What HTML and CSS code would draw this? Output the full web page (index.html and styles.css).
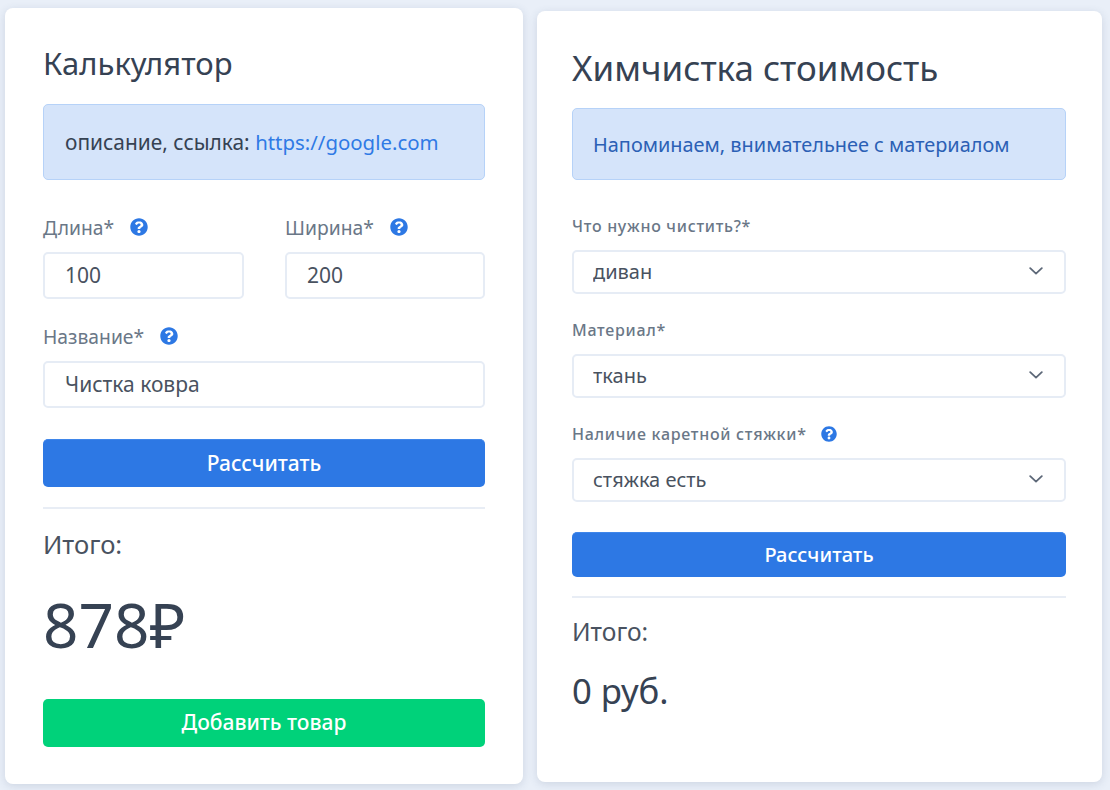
FILE: index.html
```html
<!DOCTYPE html>
<html lang="ru">
<head>
<meta charset="utf-8">
<title>Калькулятор</title>
<link rel="stylesheet" href="styles.css">
</head>
<body>
<svg class="defs" width="0" height="0" aria-hidden="true">
  <symbol id="q" viewBox="0 0 512 512"><path d="M504 256c0 137-111 248-248 248S8 393 8 256 119 8 256 8s248 111 248 248zM262.700 90c-54.500 0-89.300 23-116.600 63.800-3.500 5.300-2.400 12.400 2.700 16.300l34.700 26.300c5.200 3.900 12.600 3 16.700-2.100 17.900-22.700 30.100-35.800 57.300-35.800 20.400 0 45.700 13.100 45.700 32.900 0 15-12.400 22.700-32.500 34-23.500 13.200-54.600 29.600-54.600 70.600V300c0 6.600 5.400 12 12 12h56c6.600 0 12-5.400 12-12v-1.300c0-28.400 83-29.600 83-106.700 0-58-60.200-102-116.600-102zM256 338c-25.400 0-46 20.600-46 46s20.600 46 46 46 46-20.600 46-46-20.600-46-46-46z"/></symbol>
  <symbol id="chev" viewBox="0 0 14 8"><path d="M1.200 1.200 7 6.600l5.800-5.400" fill="none" stroke="currentColor" stroke-width="1.800" stroke-linecap="round" stroke-linejoin="round"/></symbol>
</svg>
<main class="page">
  <section class="card card-a">
    <h2 class="title">Калькулятор</h2>
    <div class="alert">описание, ссылка: <a href="#">https://google.com</a></div>
    <div class="row">
      <div class="field">
        <label class="label">Длина* <svg class="help"><use href="#q"/></svg></label>
        <input class="input" type="text" value="100">
      </div>
      <div class="field">
        <label class="label">Ширина* <svg class="help"><use href="#q"/></svg></label>
        <input class="input" type="text" value="200">
      </div>
    </div>
    <div class="field">
      <label class="label">Название* <svg class="help"><use href="#q"/></svg></label>
      <input class="input" type="text" value="Чистка ковра">
    </div>
    <button class="btn btn-blue" type="button">Рассчитать</button>
    <hr class="rule">
    <div class="total-label">Итого:</div>
    <div class="total">878₽</div>
    <button class="btn btn-green" type="button">Добавить товар</button>
  </section>
  <section class="card card-b">
    <h2 class="title">Химчистка стоимость</h2>
    <div class="alert">Напоминаем, внимательнее с материалом</div>
    <div class="field">
      <label class="label">Что нужно чистить?*</label>
      <div class="select-wrap"><select class="input"><option>диван</option></select><svg class="chev"><use href="#chev"/></svg></div>
    </div>
    <div class="field">
      <label class="label">Материал*</label>
      <div class="select-wrap"><select class="input"><option>ткань</option></select><svg class="chev"><use href="#chev"/></svg></div>
    </div>
    <div class="field">
      <label class="label">Наличие каретной стяжки* <svg class="help"><use href="#q"/></svg></label>
      <div class="select-wrap"><select class="input"><option>стяжка есть</option></select><svg class="chev"><use href="#chev"/></svg></div>
    </div>
    <button class="btn btn-blue" type="button">Рассчитать</button>
    <hr class="rule">
    <div class="total-label">Итого:</div>
    <div class="total">0 руб.</div>
  </section>
</main>
</body>
</html>
```
FILE: styles.css
```css
* { box-sizing: border-box; }
html, body { margin: 0; height: 100%; overflow: hidden; }
body {
  background: #e9eff8;
  font-family: "Noto Sans", sans-serif;
  color: #364253;
}
.defs { position: absolute; }
.page {
  display: flex;
  align-items: flex-start;
  gap: 14px;
  padding: 8px 8px 0 5px;
}
.card {
  background: #fff;
  border-radius: 8px;
  box-shadow: 0 2px 8px rgba(60, 80, 120, .16);
}
.title { margin: 0; font-weight: 400; color: #364253; }
.alert {
  background: #d5e4fa;
  border: 1px solid #b6d2f8;
  border-radius: 5px;
  display: flex;
  align-items: center;
  white-space: pre-wrap;
}
.alert a { color: #2f7ae5; text-decoration: none; }
.label { display: flex; align-items: center; color: #6a7787; white-space: pre-wrap; }
.help { fill: #2d78e4; flex: none; }
.input {
  display: block;
  width: 100%;
  background: #fff;
  border: 2px solid #e6ecf5;
  border-radius: 5px;
  color: #495260;
  font-family: inherit;
  outline: none;
  appearance: none;
  margin: 0;
}
.select-wrap { position: relative; }
.chev {
  position: absolute;
  right: 23px;
  top: 50%;
  width: 14px;
  height: 8px;
  margin-top: -5px;
  color: #5d6878;
  pointer-events: none;
}
.btn {
  display: block;
  width: 100%;
  border: 0;
  border-radius: 5px;
  color: #fff;
  font-family: inherit;
  font-weight: 500;
  padding: 0 0 2px;
}
.btn-blue { background: #2d78e4; border-top: 1px solid #3f86ea; }
.btn-green { background: #00d27a; }
.rule { border: 0; border-top: 2px solid #e8edf5; margin: 0; }
.total-label { color: #495260; }
.total { color: #364253; }

/* left card */
.card-a { width: 518px; height: 776px; padding: 37px 38px 38px; }
.card-a .title { font-size: 31px; line-height: 36px; }
.card-a .alert { height: 76px; margin-top: 23px; padding: 0 21px; font-size: 20.900px; }
.card-a .alert a { font-size: 20.400px; }
.card-a .row { display: grid; grid-template-columns: 201px 200px; gap: 41px; margin-top: 36px; }
.card-a .field { margin-top: 0; }
.card-a > .field { margin-top: 26px; }
.card-a .label { font-size: 19.300px; height: 24px; padding-bottom: 2px; margin-bottom: 12px; gap: 11px; }
.card-a .help { width: 18px; height: 18px; margin-top: -1px; }
.card-a .input { height: 47px; padding: 0 20px 2px; font-size: 21px; }
.card-a .btn { height: 48px; font-size: 21px; }
.card-a .btn-blue { margin-top: 31px; }
.card-a .rule { margin-top: 20px; }
.card-a .total-label { font-size: 25.600px; line-height: 32px; margin-top: 20px; }
.card-a .total { font-size: 62px; line-height: 80px; margin-top: 23px; }
.card-a .btn-green { margin-top: 35px; }

/* right card */
.card-b { width: 565px; height: 771px; padding: 35px 36px 35px 35px; margin-top: 3px; }
.card-b .title { font-size: 34.900px; line-height: 44px; }
.card-b .alert { height: 72px; margin-top: 18px; padding: 0 20px; font-size: 19.900px; color: #2b60b5; }
.card-b .field { margin-top: 24px; }
.card-b .alert + .field { margin-top: 34px; }
.card-b .label { font-size: 16px; font-weight: 500; height: 24px; margin-bottom: 12px; gap: 9px; letter-spacing: .72px; }
.card-b .help { width: 16px; height: 16px; margin-top: -1px; }
.card-b .input { height: 44px; padding: 0 19px 2px; font-size: 20px; }
.card-b .btn { height: 45px; font-size: 20px; }
.card-b .btn-blue { margin-top: 30px; }
.card-b .rule { margin-top: 19px; }
.card-b .total-label { font-size: 24.600px; line-height: 30px; margin-top: 19px; }
.card-b .total { font-size: 34.700px; line-height: 46px; margin-top: 21px; }
```
